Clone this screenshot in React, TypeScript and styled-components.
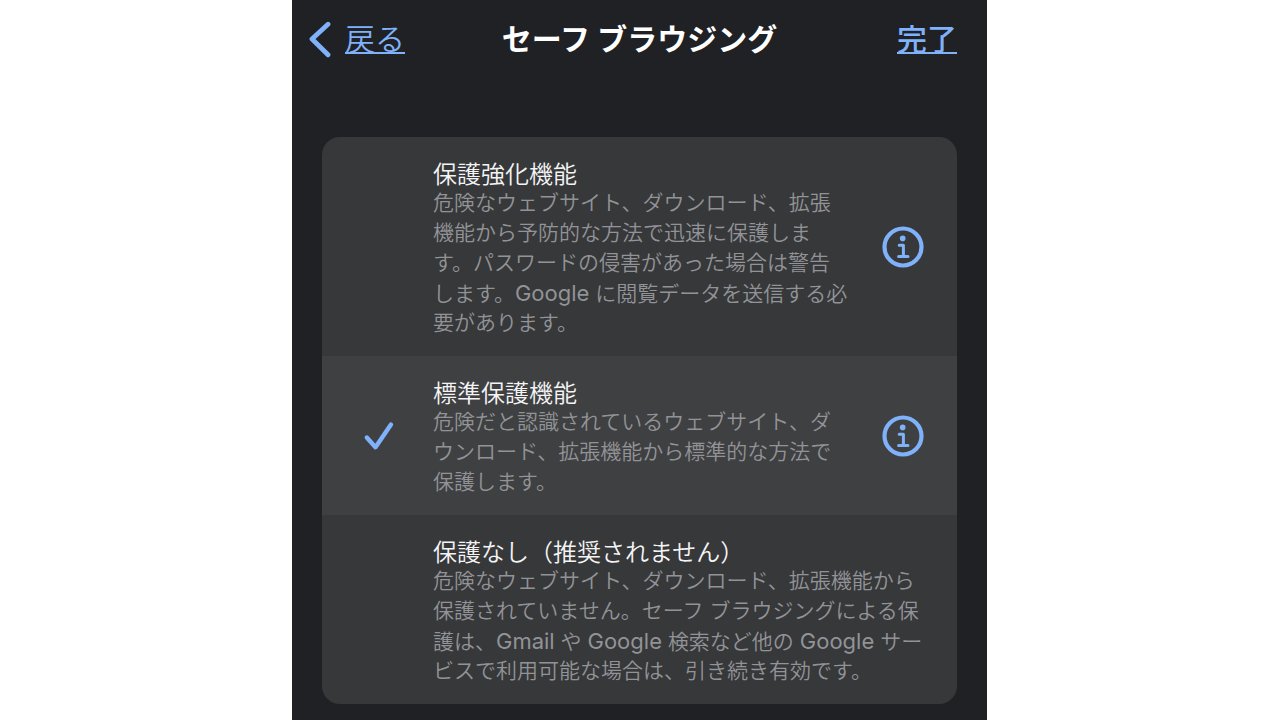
import React, { useState } from "react";
import styled, { createGlobalStyle } from "styled-components";

const GlobalStyle = createGlobalStyle`
  *, *::before, *::after { box-sizing: border-box; }
  body {
    margin: 0;
    background: #ffffff;
    font-family: Inter, "Noto Sans CJK JP", sans-serif;
  }
`;

const blue = "#7fb2fb";

const Page = styled.div`
  display: flex;
  justify-content: center;
  min-height: 100vh;
  padding-right: 1px;
`;

const Screen = styled.main`
  width: 100%;
  max-width: 695px;
  padding: 0 30px 16px;
  background: #202124;
`;

const Header = styled.header`
  display: grid;
  grid-template-columns: 1fr auto 1fr;
  align-items: center;
  height: 78px;
  margin-left: -14px;
`;

const NavLink = styled.a<{ $strong?: boolean }>`
  display: flex;
  align-items: center;
  gap: 14px;
  justify-self: ${(p) => (p.$strong ? "end" : "start")};
  color: ${blue};
  font-size: 30px;
  line-height: 40px;
  font-weight: ${(p) => (p.$strong ? 500 : 350)};
  text-decoration: none;
`;

const NavText = styled.span`
  text-decoration: underline;
  text-decoration-thickness: 2px;
  text-underline-offset: 2px;
`;

const Title = styled.h1`
  margin: 0 0 0 14px;
  color: #ffffff;
  font-size: 30px;
  line-height: 40px;
  font-weight: 700;
  white-space: nowrap;
`;

const Card = styled.form`
  margin-top: 59px;
  border-radius: 18px;
  overflow: hidden;
  background: #37383a;
`;

const Row = styled.div<{ $selected: boolean }>`
  display: flex;
  align-items: center;
  padding-right: 33px;
  background: ${(p) => (p.$selected ? "#3f4042" : "transparent")};
`;

const Option = styled.label`
  flex: 1;
  min-width: 0;
  display: flex;
  align-items: center;
  cursor: pointer;
`;

const Mark = styled.span`
  flex: none;
  display: grid;
  place-items: center;
  width: 111px;
  padding-left: 2px;
`;

const Radio = styled.input`
  grid-area: 1 / 1;
  appearance: none;
  width: 32px;
  height: 32px;
  margin: 0;
`;

const Check = styled.svg`
  grid-area: 1 / 1;
  pointer-events: none;
`;

const Texts = styled.span`
  display: block;
  padding: 24px 0 18px;
  white-space: pre;
`;

const Name = styled.span`
  display: block;
  color: #f4f4f5;
  font-size: 24px;
  line-height: 27px;
  font-weight: 350;
`;

const Description = styled.span`
  display: block;
  color: #929397;
  font-size: 21px;
  line-height: 30px;
  font-weight: 350;
`;

const Line = styled.span`
  display: block;
  height: 30px;
`;

const Latin = styled.span`
  font-size: 22px;
  font-weight: 400;
`;

const InfoButton = styled.button`
  flex: none;
  display: grid;
  padding: 0;
  border: 0;
  background: none;
  color: ${blue};
  cursor: pointer;
`;

const options = [
  {
    id: "enhanced",
    name: "保護強化機能",
    lines: [
      "危険なウェブサイト、ダウンロード、拡張",
      "機能から予防的な方法で迅速に保護しま",
      "す。パスワードの侵害があった場合は警告",
      "します。Google に閲覧データを送信する必",
      "要があります。",
    ],
    info: true,
  },
  {
    id: "standard",
    name: "標準保護機能",
    lines: [
      "危険だと認識されているウェブサイト、ダ",
      "ウンロード、拡張機能から標準的な方法で",
      "保護します。",
    ],
    info: true,
  },
  {
    id: "none",
    name: "保護なし（推奨されません）",
    lines: [
      "危険なウェブサイト、ダウンロード、拡張機能から",
      "保護されていません。セーフ ブラウジングによる保",
      "護は、Gmail や Google 検索など他の Google サー",
      "ビスで利用可能な場合は、引き続き有効です。",
    ],
    info: false,
  },
];

// Latin product names are set slightly larger than the Japanese around them.
function MixedText({ text }: { text: string }) {
  return (
    <>
      {text
        .split(/([A-Za-z]+)/)
        .map((part, i) => (i % 2 ? <Latin key={i}>{part}</Latin> : part))}
    </>
  );
}

function InfoIcon() {
  return (
    <svg width="42" height="42" viewBox="0 0 42 42" fill="none" stroke="currentColor" aria-hidden="true">
      <circle cx="21" cy="21" r="18.5" strokeWidth="4.2" />
      <circle cx="20.7" cy="12.4" r="2.8" fill="currentColor" stroke="none" />
      <path d="M17.2 19.2H21.4V30.2M16.6 30.4H26" strokeWidth="3" strokeLinecap="round" strokeLinejoin="round" />
    </svg>
  );
}

export default function App() {
  const [selected, setSelected] = useState("standard");
  return (
    <>
      <GlobalStyle />
      <Page>
        <Screen>
          <Header>
            <NavLink href="#back">
              <svg width="23" height="38" viewBox="0 0 23 38" fill="none" aria-hidden="true">
                <path d="M20 4.200L4 19L20 34.800" stroke={blue} strokeWidth="4.800" strokeLinecap="round" strokeLinejoin="round" />
              </svg>
              <NavText>戻る</NavText>
            </NavLink>
            <Title>セーフ ブラウジング</Title>
            <NavLink href="#done" $strong>
              <NavText>完了</NavText>
            </NavLink>
          </Header>
          <Card>
            {options.map((o) => (
              <Row key={o.id} $selected={o.id === selected}>
                <Option>
                  <Mark>
                    <Radio
                      type="radio"
                      name="safe-browsing"
                      value={o.id}
                      checked={o.id === selected}
                      onChange={() => setSelected(o.id)}
                    />
                    {o.id === selected && (
                      <Check width="32" height="32" viewBox="0 0 32 32" fill="none" aria-hidden="true">
                        <path d="M3.800 17.500L12.500 27.200L28 4.500" stroke={blue} strokeWidth="4.400" strokeLinecap="round" strokeLinejoin="round" />
                      </Check>
                    )}
                  </Mark>
                  <Texts>
                    <Name>{o.name}</Name>
                    <Description>
                      {o.lines.map((line) => (
                        <Line key={line}>
                          <MixedText text={line} />
                        </Line>
                      ))}
                    </Description>
                  </Texts>
                </Option>
                {o.info && (
                  <InfoButton type="button" aria-label={`${o.name}の詳細`}>
                    <InfoIcon />
                  </InfoButton>
                )}
              </Row>
            ))}
          </Card>
        </Screen>
      </Page>
    </>
  );
}
